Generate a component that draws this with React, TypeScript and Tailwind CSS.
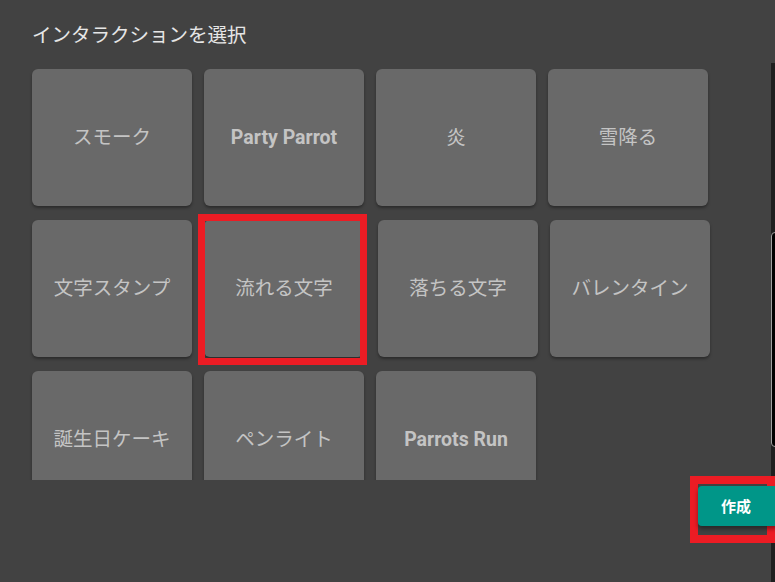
import React from "react";

const items = [
    { label: "スモーク" },
    { label: "Party Parrot", latin: true },
    { label: "炎" },
    { label: "雪降る" },
    { label: "文字スタンプ" },
    { label: "流れる文字", selected: true },
    { label: "落ちる文字" },
    { label: "バレンタイン" },
    { label: "誕生日ケーキ" },
    { label: "ペンライト" },
    { label: "Parrots Run", latin: true },
];

const font = {
    fontFamily: '"Noto Sans CJK JP", Roboto, sans-serif',
};

const App = () => {
    return (
        <div
            className="relative w-[775px] h-[582px] overflow-hidden bg-[#424242]"
            style={font}
        >
            {/* page behind the dialog */}
            <div className="absolute right-0 top-[63px] bottom-0 w-[4px] bg-[#1f1f1f]">
                <div className="absolute left-0 top-[169px] h-[215px] w-[8px] rounded-l-[4px] border border-[#a0a0a0] bg-black" />
            </div>

            <h2 className="pl-[32px] pt-[21px] h-[69px] text-[19.5px] leading-[26px] text-[#e6e6e6]">
                インタラクションを選択
            </h2>

            <div className="h-[411px] overflow-hidden pl-[32px] w-[740px]">
                <div className="flex flex-wrap gap-x-[12px] gap-y-[14px]">
                    {items.map((item) => (
                        <div
                            key={item.label}
                            className={
                                "relative " + (item.selected ? "mr-[2px]" : "")
                            }
                        >
                            <div className="flex h-[137px] w-[160px] items-center justify-center rounded-[6px] bg-[#696969] text-[#c4c4c4] shadow-[0_2px_3px_rgba(0,0,0,0.35)]">
                                {item.latin ? (
                                    <span
                                        className="text-[19.5px] font-bold"
                                        style={{ fontFamily: "Roboto, sans-serif" }}
                                    >
                                        {item.label}
                                    </span>
                                ) : (
                                    <span className="text-[19.5px] leading-none pb-[3px]">
                                        {item.label}
                                    </span>
                                )}
                            </div>
                            {item.selected && (
                                <span className="pointer-events-none absolute left-[-6px] top-[-6px] h-[151px] w-[169px] border-[7px] border-[#ec1c24]" />
                            )}
                        </div>
                    ))}
                </div>
            </div>

            <div className="flex justify-end pt-[6px]">
                <div className="relative w-[77px]">
                    <span className="pointer-events-none absolute left-[-8px] top-[-10px] h-[67px] w-[85px] border-[8px] border-[#ec1c24]" />
                    <button className="relative z-10 h-[40px] w-[80px] rounded-[4px] bg-[#009688] pr-[4px] text-[15px] font-bold text-white shadow-[0_3px_4px_rgba(0,0,0,0.4)]">
                        作成
                    </button>
                </div>
            </div>
        </div>
    );
};

export default App;
